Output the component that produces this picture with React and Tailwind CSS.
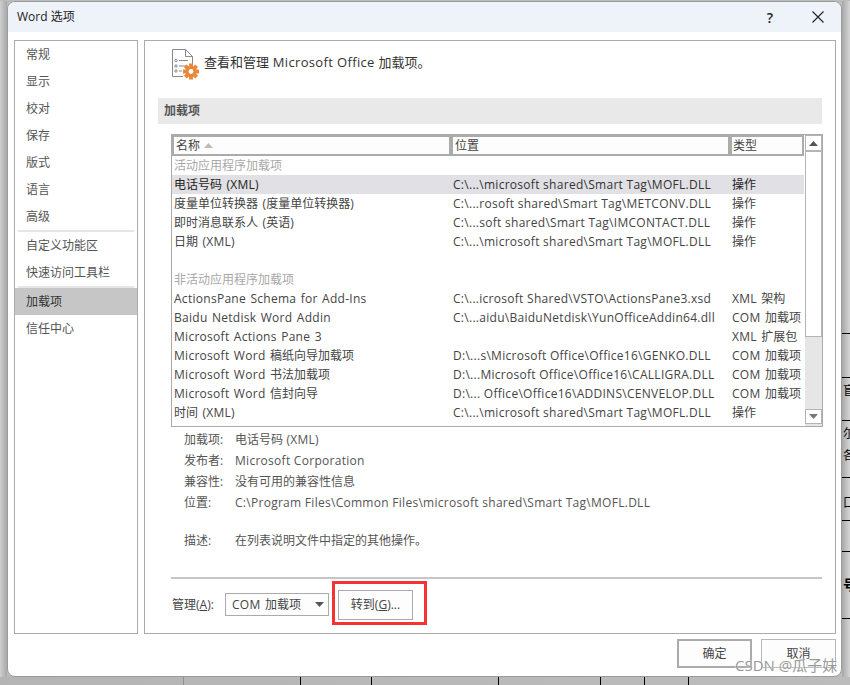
import React from "react";

const font = { fontFamily: '"Open Sans", "Noto Sans CJK SC", sans-serif' };

const navTop = ["常规", "显示", "校对", "保存", "版式", "语言", "高级"];

const addins = [
  { group: "活动应用程序加载项" },
  { name: "电话号码 (XML)", loc: "C:\\...\\microsoft shared\\Smart Tag\\MOFL.DLL", type: "操作", active: true },
  { name: "度量单位转换器 (度量单位转换器)", loc: "C:\\...rosoft shared\\Smart Tag\\METCONV.DLL", type: "操作" },
  { name: "即时消息联系人 (英语)", loc: "C:\\...soft shared\\Smart Tag\\IMCONTACT.DLL", type: "操作" },
  { name: "日期 (XML)", loc: "C:\\...\\microsoft shared\\Smart Tag\\MOFL.DLL", type: "操作" },
  { blank: true },
  { group: "非活动应用程序加载项" },
  { name: "ActionsPane Schema for Add-Ins", loc: "C:\\...icrosoft Shared\\VSTO\\ActionsPane3.xsd", type: "XML 架构" },
  { name: "Baidu Netdisk Word Addin", loc: "C:\\...aidu\\BaiduNetdisk\\YunOfficeAddin64.dll", type: "COM 加载项" },
  { name: "Microsoft Actions Pane 3", loc: "", type: "XML 扩展包" },
  { name: "Microsoft Word 稿纸向导加载项", loc: "D:\\...s\\Microsoft Office\\Office16\\GENKO.DLL", type: "COM 加载项" },
  { name: "Microsoft Word 书法加载项", loc: "D:\\...Microsoft Office\\Office16\\CALLIGRA.DLL", type: "COM 加载项" },
  { name: "Microsoft Word 信封向导", loc: "D:\\... Office\\Office16\\ADDINS\\CENVELOP.DLL", type: "COM 加载项" },
  { name: "时间 (XML)", loc: "C:\\...\\microsoft shared\\Smart Tag\\MOFL.DLL", type: "操作" },
];

const details = [
  ["加载项:", "电话号码 (XML)"],
  ["发布者:", "Microsoft Corporation"],
  ["兼容性:", "没有可用的兼容性信息"],
  ["位置:", "C:\\Program Files\\Common Files\\microsoft shared\\Smart Tag\\MOFL.DLL"],
];

// the reference's latin glyphs run wider than Open Sans, CJK ones don't
const Mixed = ({ text, className = "tracking-[0.28px]" }) =>
  text.split(/([\u4e00-\u9fff。]+)/).map((part, i) =>
    i % 2 ? (
      <span key={i}>{part}</span>
    ) : (
      <span key={i} className={className}>
        {part}
      </span>
    )
  );

const NavItem = ({ label, active }) => (
  <div className={`h-[27px] pl-[11px] leading-[27px] ${active ? "bg-[#c6c6c6] text-[#333]" : "text-[#555]"}`}>
    {label}
  </div>
);

const AddinIcon = () => (
  <svg width="30" height="32" viewBox="0 0 30 32" className="shrink-0">
    <path d="M1.5 1.5H14.5L21.5 8.5V21M14.5 1.5V8.5H21.5M1.5 1.5V28.5H12" fill="none" stroke="#8a8a8a" strokeWidth="1" />
    <g stroke="#8a8a8a" strokeWidth="1" fill="none">
      <circle cx="5" cy="12.5" r="1.2" />
      <circle cx="5" cy="18" r="1.2" />
      <circle cx="5" cy="23" r="1.2" />
      <path d="M8 12.5H17M8 18H15M8 23H11" />
    </g>
    <g fill="#e8883a">
      <circle cx="20" cy="23.5" r="5.5" />
      <rect x="18" y="15.5" width="4" height="16" />
      <rect x="12" y="21.5" width="16" height="4" />
      <rect x="18" y="15.5" width="4" height="16" transform="rotate(45 20 23.5)" />
      <rect x="18" y="15.5" width="4" height="16" transform="rotate(-45 20 23.5)" />
    </g>
    <circle cx="20" cy="23.5" r="2.4" fill="#fff" />
  </svg>
);

const Triangle = ({ down, className = "" }) => (
  <svg width="9" height="5" viewBox="0 0 9 5" className={className}>
    <path d={down ? "M0 0H9L4.5 5Z" : "M4.5 0L9 5H0Z"} fill="currentColor" />
  </svg>
);

const AddinRow = ({ row }) => {
  if (row.blank) return <div className="h-[19px]" />;
  if (row.group) {
    return <div className="h-[19px] pl-[2px] leading-[19px] text-[#a8a8a8]">{row.group}</div>;
  }
  return (
    <div className={`flex h-[19px] leading-[19px] whitespace-nowrap ${row.active ? "bg-[#e1e0e4] text-[#222]" : "text-[#444]"}`}>
      <div className="w-[281px] pl-[2px]">
        <Mixed text={row.name} className="tracking-[0.28px] [word-spacing:1px]" />
      </div>
      <div className={`w-[279px] ${row.active ? "text-[#333]" : ""}`}>
        <Mixed text={row.loc} />
      </div>
      <div className="flex-1">
        <Mixed text={row.type} className="tracking-[0.28px] [word-spacing:1px]" />
      </div>
    </div>
  );
};

const AddinList = () => (
  <div className="ml-[26px] mt-[10px] flex h-[293px] w-[652px] border border-[#ababab]">
    <div className="w-[632px]">
      <div className="flex h-[21px] gap-[4px] bg-[#ababab] py-[2px] pl-[2px] leading-[17px] text-[#444]">
        <div className="flex w-[275px] items-center bg-[#fdfdfd] pl-[2px]">
          名称
          <Triangle className="ml-[4px] text-[#c0bcb0]" />
        </div>
        <div className="w-[275px] bg-[#fdfdfd] pl-[2px]">位置</div>
        <div className="w-[70px] bg-[#fdfdfd] pl-[1px]">类型</div>
      </div>
      {addins.map((row, i) => (
        <AddinRow key={i} row={row} />
      ))}
    </div>
    {/* scrollbar */}
    <div className="ml-[1px] flex w-[17px] flex-col bg-[#e6e6e6]">
      <div className="flex h-[202px] flex-col border border-[#b4b4b4] bg-white">
        <div className="flex h-[16px] items-center justify-center border-b-2 border-[#b4b4b4] text-[#555]">
          <Triangle />
        </div>
      </div>
      <div className="flex-1" />
      <div className="mb-[2px] flex h-[15px] items-center justify-center border border-[#b4b4b4] bg-white text-[#777]">
        <Triangle down />
      </div>
    </div>
  </div>
);

const Details = () => (
  <div className="ml-[39px] mt-[2px] text-[#555]">
    {details.map(([label, value]) => (
      <div key={label} className="flex h-[21px] leading-[21px] whitespace-nowrap">
        <div className="w-[51px]">{label}</div>
        <div>
          <Mixed text={value} />
        </div>
      </div>
    ))}
    <div className="mt-[17px] flex h-[21px] leading-[21px]">
      <div className="w-[51px]">描述:</div>
      <div>在列表说明文件中指定的其他操作。</div>
    </div>
  </div>
);

const ManageBar = () => (
  <div className="ml-[27px] mt-[2px] flex items-start text-[#444]">
    <div className="mt-[12px] w-[53px] leading-[23px]">
      管理(<span className="underline">A</span>):
    </div>
    <div className="mt-[12px] flex h-[23px] w-[104px] items-center justify-between border border-[#ababab] bg-[#fdfdfd] pl-[6px] pr-[4px]">
      <span>
        <Mixed text="COM 加载项" className="tracking-[0.28px] [word-spacing:1px]" />
      </span>
      <Triangle down className="text-[#555]" />
    </div>
    <div className="ml-[3px] h-[44px] w-[95px] border-[3px] border-[#f53333] pl-[3px] pt-[6px]">
      <div className="flex h-[30px] w-[75px] items-center justify-center border border-[#ababab] bg-[#fdfdfd]">
        转到(<span className="underline">G</span>)...
      </div>
    </div>
  </div>
);

const MainPanel = () => (
  <div className="h-[594px] w-[692px] border border-[#ababab]">
    <div className="ml-[26px] mt-[8px] flex h-[30px] items-center text-[13px] text-[#333]">
      <AddinIcon />
      <span className="ml-[3px] -mt-[2px]">
        <Mixed text="查看和管理 Microsoft Office 加载项。" className="tracking-[0.35px]" />
      </span>
    </div>
    <div className="ml-[13px] mt-[19px] h-[26px] w-[664px] bg-[#e9e9e9] pl-[6px] font-semibold leading-[25px] text-[#555]">
      加载项
    </div>
    <AddinList />
    <Details />
    <div className="ml-[26px] mt-[26px] h-[2px] w-[651px] bg-[#c6c6c6]" />
    <ManageBar />
  </div>
);

const Dialog = () => (
  <div className="flex h-[676px] w-[835px] shrink-0 flex-col overflow-hidden rounded-lg border border-[#9b9b9b] bg-white text-[12px]">
    <div className="flex h-[30px] shrink-0 items-center bg-[#eef3fa] pl-[9px] text-[#222]">
      <span className="flex-1">Word 选项</span>
      <span className="mr-[39px] text-[14px] font-semibold">?</span>
      <svg width="12" height="12" viewBox="0 0 12 12" className="mr-[17px]">
        <path d="M.5.5L11.5 11.5M11.5.5L.5 11.5" stroke="#222" strokeWidth="1.1" />
      </svg>
    </div>
    <div className="ml-[6px] mt-[8px] flex gap-[6px]">
      <div className="h-[594px] w-[124px] border border-[#ababab]">
        {navTop.map((label) => (
          <NavItem key={label} label={label} />
        ))}
        <div className="mx-[3px] h-[2px] bg-[#e6e6e6]" />
        <NavItem label="自定义功能区" />
        <NavItem label="快速访问工具栏" />
        <div className="mx-[3px] h-[2px] bg-[#e6e6e6]" />
        <NavItem label="加载项" active />
        <NavItem label="信任中心" />
      </div>
      <MainPanel />
    </div>
    <div className="mr-[5px] mt-[5px] flex justify-end gap-[9px] text-[#444]">
      <div className="flex h-[29px] w-[75px] items-center justify-center border-2 border-[#ababab] bg-[#fdfdfd]">确定</div>
      <div className="flex h-[29px] w-[75px] items-center justify-center border border-[#b8b8b8] bg-[#fdfdfd]">取消</div>
    </div>
  </div>
);

// document showing behind the dialog, cut off by the right edge
const RightStrip = () => (
  <div className="flex w-[8px] flex-col overflow-hidden bg-gradient-to-r from-[#a8a8a8] to-[#d6d6d6] pt-[332px] text-[12px] leading-[14px] text-black whitespace-nowrap">
    <div className="h-[44px] border-t border-black" />
    <div className="h-[43px] border-t border-black pl-px pt-[6px]">盲</div>
    <div className="h-[27px] border-t border-black pl-px pt-[6px]">尔</div>
    <div className="h-[30px] pl-px pt-[2px]">各</div>
    <div className="h-[43px] border-t border-black pl-px pt-[18px]">口</div>
    <div className="h-[31px] border-t border-black" />
    <div className="h-[67px] border-t border-black pl-px pt-[26px] text-[14px] font-bold">号</div>
    <div className="flex-1 border-t border-black" />
  </div>
);

const BottomStrip = () => (
  <div className="flex flex-1 bg-gradient-to-r from-[#b4b4b4] to-[#bcbcbc] pl-[183px]">
    <div className="w-[117px] border-l border-[#8f8f8f]" />
    <div className="w-[71px] border-l border-black" />
    <div className="w-[127px] border-l border-black" />
    <div className="w-[102px] border-l border-black" />
    <div className="w-[44px] border-l border-black" />
    <div className="w-[44px] border-l border-black" />
    <div className="w-[44px] border-l border-black" />
  </div>
);

export default function App() {
  return (
    <div className="relative flex h-[685px] w-[850px] flex-col overflow-hidden bg-[#bcbcbc]" style={font}>
      <div className="flex pt-px">
        <div className="w-[7px] bg-gradient-to-r from-[#cfcfcf] to-[#a8a8a8]" />
        <Dialog />
        <RightStrip />
      </div>
      <BottomStrip />
      {/* watermark */}
      <div className="absolute left-[735px] top-[654px] text-[15px] text-[#999] whitespace-nowrap [text-shadow:0_0_2px_#fff]">
        CSDN @瓜子妹
      </div>
    </div>
  );
}
